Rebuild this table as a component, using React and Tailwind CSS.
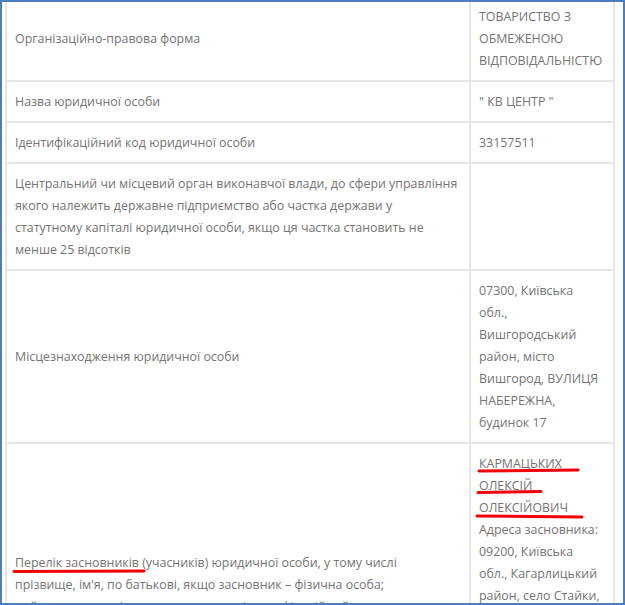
const rows = [
  {
    label: ['Організаційно-правова форма'],
    value: ['ТОВАРИСТВО З', 'ОБМЕЖЕНОЮ', 'ВІДПОВІДАЛЬНІСТЮ'],
  },
  { label: ['Назва юридичної особи'], value: ['" КВ ЦЕНТР "'] },
  { label: ['Ідентифікаційний код юридичної особи'], value: ['33157511'] },
  {
    label: [
      'Центральний чи місцевий орган виконавчої влади, до сфери управління',
      'якого належить державне підприємство або частка держави у',
      'статутному капіталі юридичної особи, якщо ця частка становить не',
      'менше 25 відсотків',
    ],
    value: [],
  },
  {
    label: ['Місцезнаходження юридичної особи'],
    value: [
      '07300, Київська',
      'обл.,',
      'Вишгородський',
      'район, місто',
      'Вишгород, ВУЛИЦЯ',
      'НАБЕРЕЖНА,',
      'будинок 17',
    ],
  },
]

const founderLabel = [
  'Перелік засновників (учасників) юридичної особи, у тому числі',
  'прізвище, ім\'я, по батькові, якщо засновник – фізична особа;',
  'найменування, місцезнаходження та ідентифікаційний код',
  'юридичної особи, якщо засновник – юридична особа',
]

const founderValue = [
  'КАРМАЦЬКИХ',
  'ОЛЕКСІЙ',
  'ОЛЕКСІЙОВИЧ',
  'Адреса засновника:',
  '09200, Київська',
  'обл., Кагарлицький',
  'район, село Стайки,',
  'ВУЛИЦЯ',
  'ШЕВЧЕНКА,',
  'будинок 12',
]

function Lines({ items }) {
  return items.map((l, i) => (
    <div key={i} className="whitespace-nowrap">{l}</div>
  ))
}

export default function App() {
  return (
    <div
      className="relative w-[625px] h-[605px] overflow-hidden border-2 border-[#4a7dc2] bg-white pl-[3px] text-[12.4px] leading-[22px] text-[#747474]"
      style={{ fontFamily: '"Open Sans", "Noto Sans", sans-serif' }}
    >
      <div className="-mt-[5px] w-[610px] border-x-2 border-[#e6e6e6]">
        {rows.map((r, i) => (
          <div key={i} className="grid grid-cols-[464px_1fr] border-b-2 border-[#e6e6e6]">
            <div className="flex items-center border-r-2 border-[#e6e6e6] px-2 py-[8.5px]">
              <div><Lines items={r.label} /></div>
            </div>
            <div className="px-2 py-[8.5px]">
              <Lines items={r.value} />
            </div>
          </div>
        ))}
        <div className="grid grid-cols-[464px_1fr]">
          <div className="border-r-2 border-[#e6e6e6] px-2 pt-[108px]">
            <Lines items={founderLabel} />
          </div>
          <div className="px-2 py-[8.5px]">
            <Lines items={founderValue} />
          </div>
        </div>
      </div>

      <svg className="pointer-events-none absolute -left-[2px] -top-[2px]" width="625" height="605">
        <g stroke="#f00000" strokeWidth="3" strokeLinecap="round" fill="none">
          <path d="M479 471 Q530 470.5 578 470" />
          <path d="M478 492.5 Q510 492 541 491.5" />
          <path d="M477 516 Q530 516.5 582 517" />
          <path d="M14 571.5 Q80 571 144 571" />
        </g>
      </svg>
    </div>
  )
}
